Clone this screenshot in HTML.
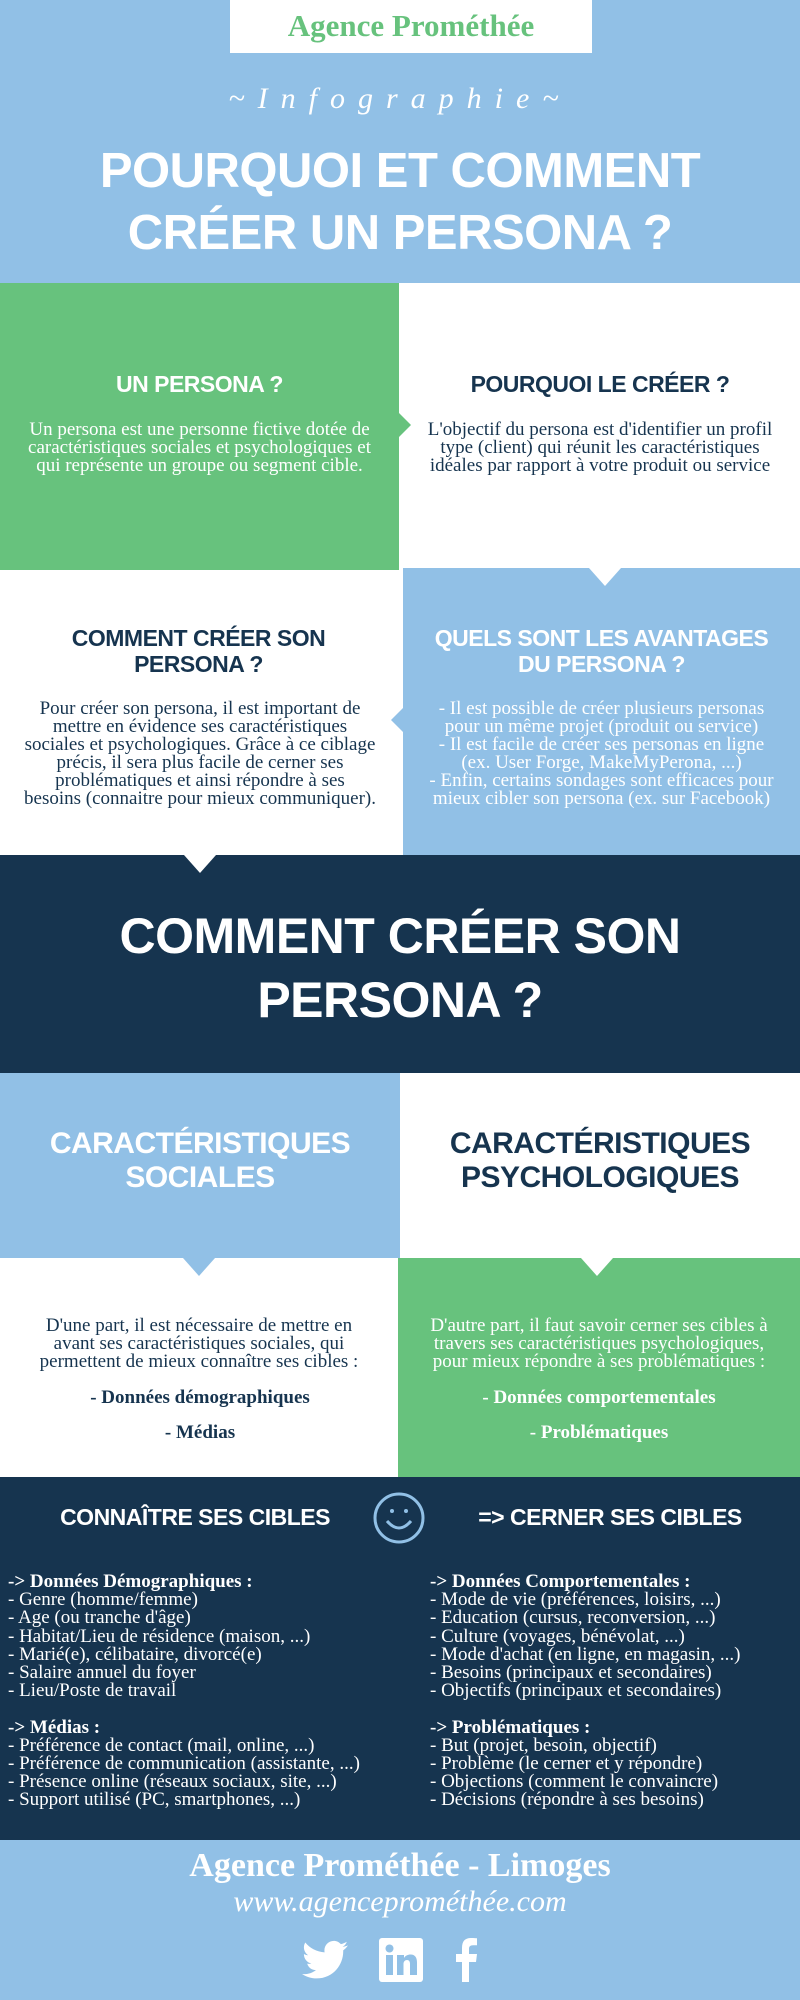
<!DOCTYPE html>
<html><head><meta charset="utf-8">
<style>
*{margin:0;padding:0;box-sizing:border-box}
body{width:800px;height:2000px;position:relative;overflow:hidden;background:#fff;font-family:"Liberation Serif",serif}
.a{position:absolute}
.blue{background:#91c0e6}.green{background:#67c27d}.navy{background:#16344f}.white{background:#fff}
.h{font-family:"Liberation Sans",sans-serif;font-weight:bold;text-align:center;letter-spacing:-0.5px;position:absolute;left:0;right:0}
.t{font-size:19px;line-height:18px;text-align:center;position:absolute;white-space:nowrap}
.tri{position:absolute;width:0;height:0}
.list{position:absolute;font-size:19px;line-height:18.2px;color:#fff;white-space:pre}
</style></head><body>
<div class="a blue" style="left:0;top:0;width:800px;height:283px"></div>
<div class="a white" style="left:230px;top:0;width:362px;height:53px"></div>
<div class="a" style="left:230px;top:8px;width:362px;text-align:center;color:#67c27d;font-weight:bold;font-size:31px">Agence Prométhée</div>
<div class="a" style="left:0;top:82px;width:800px;text-align:center;color:#fff;font-style:italic;font-size:30px;letter-spacing:13px">~Infographie~</div>
<div class="h" style="top:140px;color:#fff;font-size:49px;line-height:62px">POURQUOI ET COMMENT<br>CRÉER UN PERSONA ?</div>

<!-- row1 -->
<div class="a green" style="left:0;top:283px;width:399px;height:287px"></div>
<div class="tri" style="left:399px;top:413px;border-left:12px solid #67c27d;border-top:12px solid transparent;border-bottom:12px solid transparent"></div>
<div class="h" style="top:371px;left:0;right:401px;color:#fff;font-size:23px">UN PERSONA ?</div>
<div class="t" style="left:0;width:399px;top:421px;color:#fff">Un persona est une personne fictive dotée de<br>caractéristiques sociales et psychologiques et<br>qui représente un groupe ou segment cible.</div>
<div class="h" style="top:371px;left:400px;right:0;color:#16344f;font-size:23px">POURQUOI LE CRÉER ?</div>
<div class="t" style="left:400px;width:400px;top:421px;color:#16344f">L'objectif du persona est d'identifier un profil<br>type (client) qui réunit les caractéristiques<br>idéales par rapport à votre produit ou service</div>

<!-- row2 -->
<div class="a blue" style="left:403px;top:568px;width:397px;height:287px"></div>
<div class="tri" style="left:589px;top:568px;border-top:18px solid #fff;border-left:16px solid transparent;border-right:16px solid transparent"></div>
<div class="tri" style="left:391px;top:708px;border-right:12px solid #91c0e6;border-top:12px solid transparent;border-bottom:12px solid transparent"></div>
<div class="h" style="top:625px;left:0;right:403px;color:#16344f;font-size:23px;line-height:26px">COMMENT CRÉER SON<br>PERSONA ?</div>
<div class="t" style="left:0;width:400px;top:700px;color:#16344f">Pour créer son persona, il est important de<br>mettre en évidence ses caractéristiques<br>sociales et psychologiques. Grâce à ce ciblage<br>précis, il sera plus facile de cerner ses<br>problématiques et ainsi répondre à ses<br>besoins (connaitre pour mieux communiquer).</div>
<div class="h" style="top:625px;left:403px;right:0;color:#fff;font-size:23px;line-height:26px">QUELS SONT LES AVANTAGES<br>DU PERSONA ?</div>
<div class="t" style="left:403px;width:397px;top:700px;color:#fff">- Il est possible de créer plusieurs personas<br>pour un même projet (produit ou service)<br>- Il est facile de créer ses personas en ligne<br>(ex. User Forge, MakeMyPerona, ...)<br>- Enfin, certains sondages sont efficaces pour<br>mieux cibler son persona (ex. sur Facebook)</div>

<!-- navy big -->
<div class="a navy" style="left:0;top:855px;width:800px;height:218px"></div>
<div class="tri" style="left:184px;top:855px;border-top:18px solid #fff;border-left:16px solid transparent;border-right:16px solid transparent"></div>
<div class="h" style="top:904px;color:#fff;font-size:50px;line-height:64px">COMMENT CRÉER SON<br>PERSONA ?</div>

<!-- row3 -->
<div class="a blue" style="left:0;top:1073px;width:400px;height:185px"></div>
<div class="h" style="top:1127px;left:0;right:400px;color:#fff;font-size:30px;line-height:34px">CARACTÉRISTIQUES<br>SOCIALES</div>
<div class="h" style="top:1127px;left:400px;right:0;color:#16344f;font-size:30px;line-height:34px">CARACTÉRISTIQUES<br>PSYCHOLOGIQUES</div>

<!-- row4 -->
<div class="a green" style="left:398px;top:1258px;width:402px;height:219px"></div>
<div class="tri" style="left:183px;top:1258px;border-top:18px solid #91c0e6;border-left:16px solid transparent;border-right:16px solid transparent"></div>
<div class="tri" style="left:581px;top:1258px;border-top:18px solid #fff;border-left:16px solid transparent;border-right:16px solid transparent"></div>
<div class="t" style="left:0;width:398px;top:1317px;color:#16344f">D'une part, il est nécessaire de mettre en<br>avant ses caractéristiques sociales, qui<br>permettent de mieux connaître ses cibles :</div>
<div class="t" style="left:0;width:400px;top:1389px;color:#16344f;font-weight:bold">- Données démographiques</div>
<div class="t" style="left:0;width:400px;top:1424px;color:#16344f;font-weight:bold">- Médias</div>
<div class="t" style="left:398px;width:402px;top:1317px;color:#fff">D'autre part, il faut savoir cerner ses cibles à<br>travers ses caractéristiques psychologiques,<br>pour mieux répondre à ses problématiques :</div>
<div class="t" style="left:398px;width:402px;top:1389px;color:#fff;font-weight:bold">- Données comportementales</div>
<div class="t" style="left:398px;width:402px;top:1424px;color:#fff;font-weight:bold">- Problématiques</div>

<!-- navy lists -->
<div class="a navy" style="left:0;top:1477px;width:800px;height:363px"></div>
<div class="h" style="top:1504px;left:0;right:410px;color:#fff;font-size:23px">CONNAÎTRE SES CIBLES</div>
<div class="h" style="top:1504px;left:420px;right:0;color:#fff;font-size:23px">=&gt; CERNER SES CIBLES</div>
<svg class="a" style="left:372px;top:1491px" width="54" height="54" viewBox="0 0 54 54"><circle cx="27" cy="27" r="24" fill="none" stroke="#91c0e6" stroke-width="3"/><circle cx="20" cy="20" r="2" fill="#91c0e6"/><circle cx="34" cy="20" r="2" fill="#91c0e6"/><path d="M15 30 Q27 44 39 30" fill="none" stroke="#91c0e6" stroke-width="3"/></svg>
<div class="list" style="left:8px;top:1573px"><b>-&gt; Données Démographiques :</b>
- Genre (homme/femme)
- Age (ou tranche d'âge)
- Habitat/Lieu de résidence (maison, ...)
- Marié(e), célibataire, divorcé(e)
- Salaire annuel du foyer
- Lieu/Poste de travail

<b>-&gt; Médias :</b>
- Préférence de contact (mail, online, ...)
- Préférence de communication (assistante, ...)
- Présence online (réseaux sociaux, site, ...)
- Support utilisé (PC, smartphones, ...)</div>
<div class="list" style="left:430px;top:1573px"><b>-&gt; Données Comportementales :</b>
- Mode de vie (préférences, loisirs, ...)
- Education (cursus, reconversion, ...)
- Culture (voyages, bénévolat, ...)
- Mode d'achat (en ligne, en magasin, ...)
- Besoins (principaux et secondaires)
- Objectifs (principaux et secondaires)

<b>-&gt; Problématiques :</b>
- But (projet, besoin, objectif)
- Problème (le cerner et y répondre)
- Objections (comment le convaincre)
- Décisions (répondre à ses besoins)</div>

<!-- footer -->
<div class="a blue" style="left:0;top:1840px;width:800px;height:160px"></div>
<div class="a" style="left:0;top:1847px;width:800px;text-align:center;color:#fff;font-weight:bold;font-size:34px">Agence Prométhée - Limoges</div>
<div class="a" style="left:0;top:1885px;width:800px;text-align:center;color:#fff;font-style:italic;font-size:30px">www.agenceprométhée.com</div>
<svg class="a" style="left:302px;top:1940px" width="46" height="40" viewBox="0 0 24 20"><path fill="#fff" d="M24 2.4c-.9.4-1.8.6-2.8.8 1-.6 1.8-1.6 2.2-2.7-1 .6-2 1-3.1 1.2C19.4.7 18.1 0 16.6 0c-2.7 0-4.9 2.2-4.9 4.9 0 .4 0 .8.1 1.1C7.7 5.8 4.1 3.9 1.7.9c-.4.7-.7 1.6-.7 2.5 0 1.7.9 3.2 2.2 4.1-.8 0-1.6-.2-2.2-.6v.1c0 2.4 1.7 4.4 3.9 4.8-.4.1-.8.2-1.3.2-.3 0-.6 0-.9-.1.6 2 2.4 3.4 4.6 3.4-1.7 1.3-3.8 2.1-6.1 2.1-.4 0-.8 0-1.2-.1C2.2 18.8 4.8 19.6 7.5 19.6c9.1 0 14-7.5 14-14v-.6c1-.7 1.8-1.6 2.5-2.6z"/></svg>
<svg class="a" style="left:379px;top:1938px" width="44" height="44" viewBox="0 0 44 44"><rect width="44" height="44" rx="3" fill="#fff"/><rect x="7" y="17" width="7" height="20" fill="#91c0e6"/><circle cx="10.5" cy="10.5" r="4" fill="#91c0e6"/><path d="M18 17h7v3c1.5-2.5 4-3.5 6.5-3.5 4.5 0 6.5 3 6.5 8V37h-7V26c0-2.5-1-4-3-4s-3.5 1.5-3.5 4v11H18z" fill="#91c0e6"/></svg>
<svg class="a" style="left:456px;top:1938px" width="22" height="44" viewBox="0 0 22 44"><path fill="#fff" d="M6 44V24H0v-8h6v-6C6 3 9 0 15 0c3 0 6 .3 6 .3v7h-4c-3 0-4 1.5-4 3.5V16h8l-1 8h-7v20z"/></svg>
</body></html>
